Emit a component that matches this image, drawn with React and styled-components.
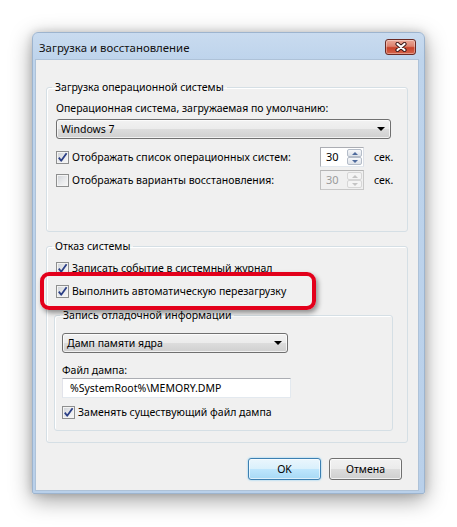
import React from "react";
import styled, { createGlobalStyle } from "styled-components";

const GlobalStyle = createGlobalStyle`
  html, body {
    margin: 0;
    padding: 0;
    background: #fff;
  }
  body {
    font-family: "Noto Sans", "Liberation Sans", sans-serif;
    font-size: 10.5px;
    color: #000;
  }
  * {
    box-sizing: border-box;
  }
`;

function CheckBox({ checked }) {
  return (
    <Box>
      {checked && (
        <svg width="11" height="11" viewBox="0 0 11 11">
          <path
            d="M1.8 5.6 L4.2 8.8 L9.6 1.2"
            fill="none"
            stroke="#2b3f86"
            strokeWidth="1.8"
            strokeLinejoin="round"
          />
        </svg>
      )}
    </Box>
  );
}

function Spinner({ value, disabled }) {
  return (
    <SpinBox disabled={disabled}>
      <SpinValue disabled={disabled}>{value}</SpinValue>
      <SpinButtons>
        <SpinButton disabled={disabled}>
          <Arrow disabled={disabled} />
        </SpinButton>
        <SpinButton disabled={disabled}>
          <Arrow down disabled={disabled} />
        </SpinButton>
      </SpinButtons>
    </SpinBox>
  );
}

function Select({ value, width }) {
  return (
    <Combo width={width}>
      <span>{value}</span>
      <DropArrow />
    </Combo>
  );
}

function App() {
  return (
    <Stage>
      <GlobalStyle />
      <Window>
        <TitleBar>
          <Title>Загрузка и восстановление</Title>
          <CloseButton>
            <svg width="14" height="10" viewBox="0 0 14 10">
              <path d="M3.5 2 L10.5 8 M10.5 2 L3.5 8" stroke="#3d1a1a" strokeWidth="4.2" strokeLinecap="round" />
              <path d="M3.5 2 L10.5 8 M10.5 2 L3.5 8" stroke="#fff" strokeWidth="2.2" strokeLinecap="round" />
            </svg>
          </CloseButton>
        </TitleBar>

        <Client>
          <Group>
            <Legend>Загрузка операционной системы</Legend>
            <GroupBody pad="5px 16px 41px 9px">
              <Text>Операционная система, загружаемая по умолчанию:</Text>
              <Gap h={3} />
              <Select value="Windows 7" />
              <Gap h={8} />
              <SpinRow>
                <Check>
                  <CheckBox checked />
                  <span>Отображать список операционных систем:</span>
                </Check>
                <Spinner value="30" />
                <Unit>сек.</Unit>
              </SpinRow>
              <Gap h={3} />
              <SpinRow>
                <Check>
                  <CheckBox />
                  <span>Отображать варианты восстановления:</span>
                </Check>
                <Spinner value="30" disabled />
                <Unit>сек.</Unit>
              </SpinRow>
            </GroupBody>
          </Group>

          <Group top={6}>
            <Legend>Отказ системы</Legend>
            <GroupBody pad="6px 14px 11px 9px">
              <Check>
                <CheckBox checked />
                <span>Записать событие в системный журнал</span>
              </Check>
              <Gap h={7} />
              <Check>
                <CheckBox checked />
                <span>Выполнить автоматическую перезагрузку</span>
              </Check>
              <Group top={8} left={-2}>
                <Legend>Запись отладочной информации</Legend>
                <GroupBody pad="10px 7px 10px 7px">
                  <Select value="Дамп памяти ядра" width={226} />
                  <Gap h={10} />
                  <Text lh={15}>Файл дампа:</Text>
                  <Field>%SystemRoot%\MEMORY.DMP</Field>
                  <Gap h={6} />
                  <Check>
                    <CheckBox checked />
                    <span>Заменять существующий файл дампа</span>
                  </Check>
                </GroupBody>
              </Group>
            </GroupBody>
          </Group>

          <Buttons>
            <Button primary>OK</Button>
            <Button>Отмена</Button>
          </Buttons>
        </Client>
      </Window>
      <Highlight />
    </Stage>
  );
}

const Stage = styled.div`
  position: relative;
  width: 457px;
  height: 527px;
  padding: 32px 0 0 32px;
  overflow: hidden;
`;

const Window = styled.div`
  width: 393px;
  height: 462px;
  display: flex;
  flex-direction: column;
  padding: 0 5px 2px 2px;
  background: linear-gradient(180deg, #c9dbef 0px, #bed4ec 26px, #b9d0ea 100%);
  border: 1px solid #9db4ce;
  border-radius: 6px 6px 2px 2px;
  box-shadow: 0 6px 22px rgba(0, 0, 0, 0.38), 0 0 8px rgba(0, 0, 0, 0.15);
`;

const TitleBar = styled.div`
  height: 26px;
  display: flex;
  justify-content: space-between;
  padding-left: 4px;
`;

const Title = styled.div`
  padding-top: 7px;
  font-size: 11.4px;
  line-height: 16px;
  color: #111;
`;

const CloseButton = styled.div`
  width: 31px;
  height: 16px;
  margin-top: 6px;
  margin-right: 3px;
  display: flex;
  align-items: center;
  justify-content: center;
  border: 1px solid #6b2a24;
  border-radius: 3px;
  background: linear-gradient(
    180deg,
    #eba999 0%,
    #dc826f 45%,
    #c8432b 55%,
    #d5644b 100%
  );
  box-shadow: inset 0 0 0 1px rgba(255, 255, 255, 0.35);
`;

const Client = styled.div`
  flex: 1;
  background: #f0f0f0;
  border: 1px solid #aec2d8;
  padding: 19px 10px 0 10px;
`;

const Group = styled.fieldset`
  margin: ${(p) => p.top || 0}px 0 0 ${(p) => p.left || 0}px;
  padding: 0;
  min-width: 0;
  border: 1px solid #d5dfe5;
  border-radius: 3px;
  box-shadow: inset 1px 1px 0 #fff;
`;

const Legend = styled.legend`
  margin-left: 5px;
  padding: 0 3px;
  line-height: 16px;
  color: #000;
`;

const GroupBody = styled.div`
  padding: ${(p) => p.pad};
`;

const Gap = styled.div`
  height: ${(p) => p.h}px;
`;

const Text = styled.div`
  line-height: ${(p) => p.lh || 16}px;
`;

const Combo = styled.div`
  width: ${(p) => (p.width ? `${p.width}px` : "100%")};
  height: 20px;
  display: flex;
  align-items: center;
  justify-content: space-between;
  padding: 0 5px 0 4px;
  border: 1px solid #707070;
  border-radius: 3px;
  background: linear-gradient(180deg, #f2f2f2 0%, #ebebeb 50%, #dddddd 50%, #cfcfcf 100%);
  box-shadow: inset 0 0 0 1px rgba(255, 255, 255, 0.7);
`;

const DropArrow = styled.span`
  width: 0;
  height: 0;
  border-left: 4px solid transparent;
  border-right: 4px solid transparent;
  border-top: 4px solid #000;
`;

const SpinRow = styled.div`
  display: grid;
  grid-template-columns: 264px 44px auto;
  align-items: center;
  height: 20px;
`;

const Check = styled.div`
  display: flex;
  align-items: center;
  gap: 3px;
  line-height: 16px;
  white-space: nowrap;
`;

const Box = styled.span`
  flex: none;
  width: 13px;
  height: 13px;
  display: flex;
  align-items: center;
  justify-content: center;
  border: 1px solid #8e8f8f;
  background: linear-gradient(135deg, #cdd1d6 0%, #e9eaec 55%, #f8f8f8 100%);
  box-shadow: inset 0 0 0 1px #f4f4f4;
`;

const SpinBox = styled.div`
  height: 20px;
  display: flex;
  border: 1px solid ${(p) => (p.disabled ? "#bfbfbf" : "#abadb3")};
  border-top-color: ${(p) => (p.disabled ? "#b5b5b5" : "#abadb3")};
  border-right-color: ${(p) => (p.disabled ? "#c8c8c8" : "#dbdfe6")};
  border-bottom-color: ${(p) => (p.disabled ? "#c8c8c8" : "#e3e9ef")};
  background: ${(p) => (p.disabled ? "#f0f0f0" : "#fff")};
`;

const SpinValue = styled.div`
  flex: 1;
  padding-left: 5px;
  font-size: 11px;
  line-height: 18px;
  color: ${(p) => (p.disabled ? "#9a9a9a" : "#000")};
`;

const SpinButtons = styled.div`
  width: 16px;
  display: flex;
  flex-direction: column;
  padding: 1px 1px 1px 0;
`;

const SpinButton = styled.div`
  flex: 1;
  display: flex;
  align-items: center;
  justify-content: center;
  border: 1px solid ${(p) => (p.disabled ? "#d6d6d6" : "#b4bcc8")};
  border-radius: 2px;
  background: ${(p) =>
    p.disabled
      ? "#f4f4f4"
      : "linear-gradient(180deg, #f7f8fa 0%, #e9ecf1 50%, #dde2e9 100%)"};
`;

const Arrow = styled.span`
  width: 0;
  height: 0;
  border-left: 3px solid transparent;
  border-right: 3px solid transparent;
  ${(p) =>
    p.down
      ? `border-top: 3px solid ${p.disabled ? "#c4c4c4" : "#4e6a9c"};`
      : `border-bottom: 3px solid ${p.disabled ? "#c4c4c4" : "#4e6a9c"};`}
`;

const Unit = styled.span`
  margin-left: 10px;
  line-height: 16px;
`;

const Field = styled.div`
  width: 229px;
  height: 20px;
  padding-left: 7px;
  line-height: 18px;
  background: #fff;
  border: 1px solid #e3e9ef;
  border-top-color: #abadb3;
  border-left-color: #e2e3ea;
`;

const Buttons = styled.div`
  display: flex;
  justify-content: flex-end;
  gap: 8px;
  margin-top: 15px;
  padding-right: 6px;
`;

const Button = styled.div`
  width: 73px;
  height: 22px;
  display: flex;
  align-items: center;
  justify-content: center;
  border: 1px solid ${(p) => (p.primary ? "#3c7fb1" : "#707070")};
  border-radius: 3px;
  background: ${(p) =>
    p.primary
      ? "linear-gradient(180deg, #eaf6fd 0%, #d9f0fc 50%, #bee6fd 50%, #a7d9f5 100%)"
      : "linear-gradient(180deg, #f2f2f2 0%, #ebebeb 50%, #dddddd 50%, #cfcfcf 100%)"};
  box-shadow: ${(p) =>
    p.primary
      ? "inset 0 0 0 1px rgba(255,255,255,0.6), 0 0 2px #6dc6f5"
      : "inset 0 0 0 1px rgba(255,255,255,0.7)"};
`;

const Highlight = styled.div`
  position: absolute;
  left: 40px;
  top: 272px;
  width: 276px;
  height: 38px;
  border: 4px solid #e3001b;
  border-radius: 9px;
  box-shadow: 2px 3px 5px rgba(0, 0, 0, 0.4);
`;

export default App;
